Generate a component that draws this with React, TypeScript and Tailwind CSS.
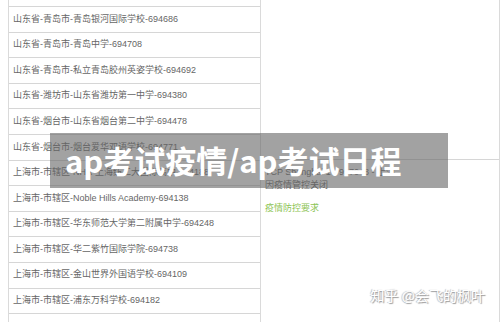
import React from "react";

const rows = [
  "山东省-青岛市-青岛银河国际学校-694686",
  "山东省-青岛市-青岛中学-694708",
  "山东省-青岛市-私立青岛胶州英姿学校-694692",
  "山东省-潍坊市-山东省潍坊第一中学-694380",
  "山东省-烟台市-山东省烟台第二中学-694478",
  "山东省-烟台市-烟台爱华双语学校-694771",
  "上海市-市辖区-NHA-上海纺工大国际高中-694188",
  "上海市-市辖区-Noble Hills Academy-694138",
  "上海市-市辖区-华东师范大学第二附属中学-694248",
  "上海市-市辖区-华二紫竹国际学院-694738",
  "上海市-市辖区-金山世界外国语学校-694109",
  "上海市-市辖区-浦东万科学校-694182",
  "",
];

export default function App() {
  return (
    <div
      className="relative w-[500px] h-[322px] overflow-hidden bg-white"
      style={{ fontFamily: '"Liberation Sans", "Noto Sans CJK SC", sans-serif' }}
    >
      <div className="flex h-full pl-[8px]">
        <div className="w-[253px] h-full border-l border-r border-[#dadada] flex flex-col">
          <div className="h-[6px] shrink-0" />
          {rows.map((r, i) => (
            <div
              key={i}
              className="h-[25.6px] shrink-0 border-t border-[#d6d6d6] flex items-center pl-[4px] text-[9px] text-[#666] whitespace-nowrap"
            >
              {r}
            </div>
          ))}
        </div>
        <div className="flex-1 h-full border-r border-[#dadada] flex flex-col">
          <div className="h-[160px] shrink-0 border-b border-[#d6d6d6]" />
          <div className="pl-[4px] pt-[6px] text-[9px] leading-[13px] text-[#666]">
            <div>TCP Shanghai 1 - 997048 - 上海</div>
            <div>因疫情管控关闭</div>
            <div className="mt-[10px] text-[#8dc455]">疫情防控要求</div>
          </div>
          <div className="flex-1" />
          <div
            className="self-end pr-[14px] pb-[16px] text-[14px] text-white"
            style={{
              fontFamily: '"Noto Sans CJK SC", sans-serif',
              textShadow: "1px 1px 1px #999, -1px 0 1px #bbb",
            }}
          >
            知乎 @会飞的枫叶
          </div>
        </div>
      </div>
      <div
        className="absolute left-[50px] top-[133px] w-[398px] h-[55px] bg-[rgba(100,100,100,0.6)] flex items-center pl-[15px] text-white text-[31px] font-bold whitespace-nowrap"
        style={{ fontFamily: '"Noto Sans CJK SC", sans-serif' }}
      >
        ap考试疫情/ap考试日程
      </div>
    </div>
  );
}
